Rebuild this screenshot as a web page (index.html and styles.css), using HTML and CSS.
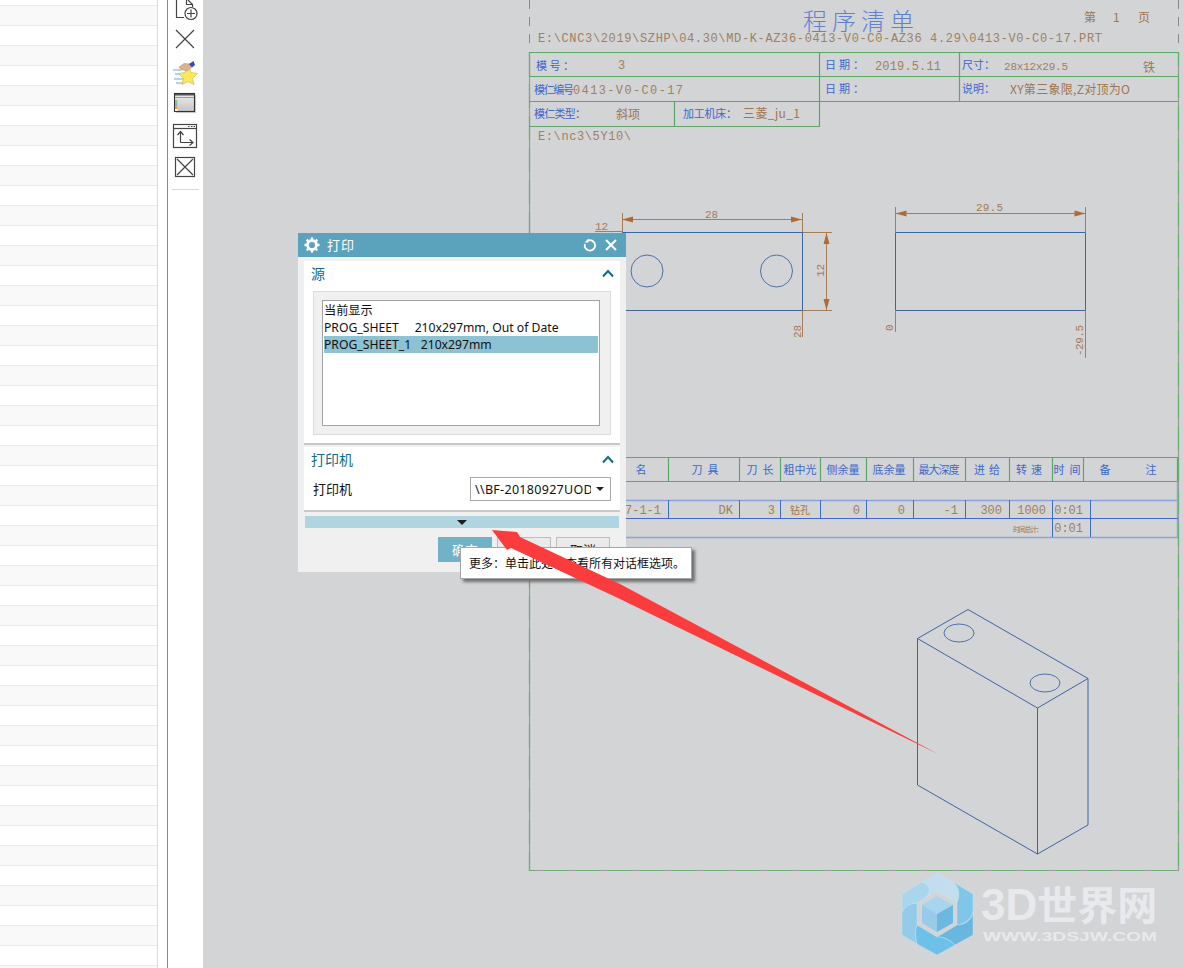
FILE: index.html
```html
<!DOCTYPE html>
<html lang="zh">
<head>
<meta charset="utf-8">
<title>打印</title>
<link rel="stylesheet" href="styles.css">
</head>
<body>
<div class="app">
  <div class="list">
    <div class="row alt"></div><div class="row"></div><div class="row alt"></div><div class="row"></div><div class="row alt"></div><div class="row"></div><div class="row alt"></div>
    <div class="row"></div><div class="row alt"></div><div class="row"></div><div class="row alt"></div><div class="row"></div><div class="row alt"></div><div class="row"></div>
    <div class="row alt"></div><div class="row"></div><div class="row alt"></div><div class="row"></div><div class="row alt"></div><div class="row"></div><div class="row alt"></div>
    <div class="row"></div><div class="row alt"></div><div class="row"></div><div class="row alt"></div><div class="row"></div><div class="row alt"></div><div class="row"></div>
    <div class="row alt"></div><div class="row"></div><div class="row alt"></div><div class="row"></div><div class="row alt"></div><div class="row"></div><div class="row alt"></div>
    <div class="row"></div><div class="row alt"></div><div class="row"></div><div class="row alt"></div><div class="row"></div><div class="row alt"></div><div class="row"></div>
    <div class="row alt"></div><div class="row"></div><div class="row alt"></div><div class="row"></div><div class="row alt"></div><div class="row"></div><div class="row alt"></div>
  </div>
  <div class="spacer"></div>
  <div class="toolbar">
    <svg class="tool" width="35" height="22" viewBox="168 0 35 22" fill="none" stroke="#444" stroke-width="1.2">
      <path d="M176.5 0V17.5H184"/><path d="M186.5 0V4.5H192.5V7"/><path d="M192.5 4.5L188 0"/>
      <circle cx="191" cy="13.5" r="6" fill="#fff"/><path d="M191 9.5V17.5M187 13.5H195"/>
    </svg>
    <svg class="tool" width="35" height="22" viewBox="168 28 35 22" fill="none" stroke="#444" stroke-width="1.2">
      <path d="M176 30L194 48M194 30L176 48"/>
    </svg>
    <svg class="tool" width="35" height="30" viewBox="168 56 35 30" fill="none">
      <path d="M173 70H182M175 74H183M174 79H184M176 83H184" stroke="#6aa9dc" stroke-width="1"/>
      <path d="M188 65L191 72.5L197.5 73.5L192.5 78.5L194 84.500L188 81.500L182 84.500L183.500 78.500L178.500 73.500L185 72.500Z" fill="#fbe95c" stroke="#d9bb58" stroke-width=".8"/>
      <path d="M179 67L184 63.500L190 64L191.500 67.500L187 71L183 70L180 68.500Z" fill="#d9b48c" stroke="#a88a6c" stroke-width=".5"/>
      <path d="M189 64L193.500 61L195 65L192 67.500Z" fill="#3b46c0"/>
    </svg>
    <svg class="tool" width="35" height="22" viewBox="168 92 35 22" fill="none">
      <defs><linearGradient id="winfill" x1="0" y1="0" x2="0" y2="1"><stop offset="0" stop-color="#eeeeee"/><stop offset="1" stop-color="#c4c4c4"/></linearGradient></defs>
      <rect x="176" y="95" width="20" height="18" fill="#ccc"/>
      <rect x="174.500" y="93.500" width="20" height="18" fill="url(#winfill)" stroke="#333" stroke-width="1.100"/>
      <rect x="175" y="94" width="19" height="1.500" fill="#555"/>
      <rect x="175" y="97" width="19" height="1" fill="#999"/>
      <rect x="175" y="100" width="2.500" height="11" fill="#fff"/>
      <rect x="175" y="100" width="2.500" height="3" fill="#7ccb6a"/><rect x="175" y="103" width="2.500" height="3" fill="#62bfe6"/><rect x="175" y="106" width="2.500" height="3" fill="#ef9c3f"/>
    </svg>
    <svg class="tool" width="35" height="30" viewBox="168 120 35 30" fill="none" stroke="#444" stroke-width="1.200">
      <rect x="173.500" y="124.500" width="23" height="23"/><path d="M173.500 128.500H196.500"/>
      <path d="M188 126.500H189.500M191 126.500H192.500M193.500 126.500H195" />
      <path d="M180.500 142.500V132M177.500 135L180.500 131.500L183.500 135M180.500 142.500H192.500M189.500 139.500L193 142.500L189.500 145.500"/>
    </svg>
    <svg class="tool" width="35" height="22" viewBox="168 156 35 22" fill="none" stroke="#444" stroke-width="1.200">
      <rect x="175.500" y="157.500" width="19" height="19"/><path d="M177 159L193 175M193 159L177 175"/>
    </svg>
    <div class="tool-sep"></div>
  </div>
  <div class="canvas">
    <svg class="sheet" width="981" height="968" viewBox="203 0 981 968" fill="none">
      <path class="dash" d="M529.500 0V50M1178.500 0V50"/>
      <path class="frame-gray" d="M529.500 52V870.500H1178.500V52"/>
      <path class="frame" d="M529.500 52V870.500H1178.500V52"/>
      <path class="green" d="M529 52.500H1178M529 76.500H1178M529 101.500H1178M529 126.500H820M819.500 52V126M959.500 52V101M674.500 101V126"/>

      <text class="title" x="803" y="30" textLength="111">程序清单</text>
      <text class="val" x="1084" y="22">第</text><text class="val" x="1113" y="22">1</text><text class="val" x="1138" y="22">页</text>
      <text class="mono" x="538" y="42" textLength="564">E:\CNC3\2019\SZHP\04.30\MD-K-AZ36-0413-V0-C0-AZ36 4.29\0413-V0-C0-17.PRT</text>

      <text class="lbl" x="536" y="70" textLength="38">模号：</text>
      <text class="mono" x="618" y="69">3</text>
      <text class="lbl" x="825" y="69" textLength="39">日期：</text>
      <text class="mono" x="875" y="70" textLength="66">2019.5.11</text>
      <text class="lbl" x="962" y="69" textLength="33">尺寸：</text>
      <text class="mono small" x="1004" y="70" textLength="64">28x12x29.5</text>
      <text class="val" x="1143" y="72">铁</text>

      <text class="lbl" x="534" y="94" textLength="40">模仁编号</text>
      <text class="mono" x="573" y="94" textLength="110">0413-V0-C0-17</text>
      <text class="lbl" x="825" y="93" textLength="39">日期：</text>
      <text class="lbl" x="962" y="93" textLength="33">说明：</text>
      <text class="val" x="1010" y="94" textLength="120">XY第三象限,Z对顶为O</text>

      <text class="lbl" x="534" y="118" textLength="52">模仁类型：</text>
      <text class="val" x="616" y="119" textLength="24">斜项</text>
      <text class="lbl" x="683" y="118" textLength="54">加工机床：</text>
      <text class="val" x="743" y="118" textLength="57">三菱_ju_1</text>
      <text class="mono" x="538" y="140" textLength="93">E:\nc3\5Y10\</text>

      <path class="dim" d="M622.500 213V233M802.500 213V337M802 232.500H832M802 310.500H832M622 219.500H802M826.500 233V310M595 231.500H622"/>
      <path class="head" d="M622 219.500L633 216.500V222.500ZM802 219.500L791 216.500V222.500ZM826.500 233L823.500 244H829.500ZM826.500 310L823.500 299H829.500Z"/>
      <text class="dimtext" x="705" y="218">28</text>
      <text class="dimtext" x="595" y="230">12</text>
      <text class="dimtext" transform="translate(824 277) rotate(-90)">12</text>
      <text class="dimtext" transform="translate(801 338) rotate(-90)">28</text>

      <path class="blue" d="M622 232.500H802.500V310.500H622M895.500 232.500H1085.500V310.500H895.500Z"/>
      <circle class="blue thin" cx="647" cy="271" r="16"/>
      <circle class="blue thin" cx="776.500" cy="271" r="16"/>

      <path class="dim" d="M895.500 207V232M1085.500 207V232M895.500 310V332M1085.500 310V358M895 213.500H1085"/>
      <path class="head" d="M895.500 213.500L906.500 210.500V216.500ZM1085.500 213.500L1074.500 210.500V216.500Z"/>
      <text class="dimtext" x="976" y="211" textLength="27">29.5</text>
      <text class="dimtext" transform="translate(893 331) rotate(-90)">0</text>
      <text class="dimtext" transform="translate(1083 356) rotate(-90)" textLength="31">-29.5</text>

      <path class="green" d="M529 457.500H1178M529 481.500H1178M668.500 457V481M739.500 457V481M780.500 457V481M820.500 457V481M866.500 457V481M913.500 457V481M965.500 457V481M1009.500 457V481M1052.500 457V481M1083.500 457V481M1177.500 457V481"/>
      <path class="tbl-soft" d="M529 500.500H1178M529 537.500H1178M1177.500 481V537"/>
      <path class="tbl" d="M529 518.500H1178M668.500 500V518M739.500 500V518M780.500 500V518M820.500 500V518M866.500 500V518M913.500 500V518M965.500 500V518M1009.500 500V518M1052.500 500V537M1090.500 500V537"/>

      <text class="lbl mid" x="641" y="474">名</text>
      <text class="lbl mid" x="705" y="474" textLength="27">刀具</text>
      <text class="lbl mid" x="760" y="474" textLength="27">刀长</text>
      <text class="lbl mid" x="800" y="474" textLength="33">粗中光</text>
      <text class="lbl mid" x="843" y="474" textLength="33">侧余量</text>
      <text class="lbl mid" x="889" y="474" textLength="33">底余量</text>
      <text class="lbl mid" x="939" y="474" textLength="41">最大深度</text>
      <text class="lbl mid" x="987" y="474" textLength="26">进给</text>
      <text class="lbl mid" x="1029" y="474" textLength="26">转速</text>
      <text class="lbl mid" x="1067" y="474" textLength="27">时间</text>
      <text class="lbl mid" x="1105" y="474">备</text>
      <text class="lbl mid" x="1151" y="474">注</text>

      <text class="mono end" x="661" y="514">17-1-1</text>
      <text class="mono end" x="733" y="514">DK</text>
      <text class="mono end" x="775" y="514">3</text>
      <text class="val tiny mid" x="800" y="514">钻孔</text>
      <text class="mono end" x="860" y="514">0</text>
      <text class="mono end" x="905" y="514">0</text>
      <text class="mono end" x="958" y="514">-1</text>
      <text class="mono end" x="1002" y="514">300</text>
      <text class="mono end" x="1046" y="514">1000</text>
      <text class="mono end" x="1083" y="514">0:01</text>
      <text class="val micro" x="1013" y="532" textLength="30">时间总计：</text>
      <text class="mono end" x="1083" y="532">0:01</text>

      <path class="blue" d="M968 609.500L917.500 638.500L1037.500 708L1088 678.500ZM917.500 638.500V785L1037.500 854L1088 825V678.500M1037.500 708V854"/>
      <ellipse class="blue thin" cx="959" cy="633" rx="15" ry="9"/>
      <ellipse class="blue thin" cx="1045" cy="683" rx="15" ry="9"/>

      <g class="logo">
        <path class="blade" d="M922 882L937 873L953 882C960 888 960 896 957 903L937 891L925 898C932 892 930 885 922 882Z" fill="#c2dded"/>
        <path class="blade" d="M953 882L973 894V912C972 920 962 925 957 925V903C960 896 960 888 953 882Z" fill="#7fc6e8"/>
        <path class="blade" d="M973 912V935L955 945C948 938 942 937 937 937L957 925C965 925 972 920 973 912Z" fill="#69b6de"/>
        <path class="blade" d="M955 945L937 955L917 944C915 936 915 930 917 925L937 937C942 937 948 938 955 945Z" fill="#6cc0ea"/>
        <path class="blade" d="M917 944L902 935V912C905 905 912 903 917 903V925C915 930 915 936 917 944Z" fill="#93cbe8"/>
        <path class="blade" d="M902 912V894L922 882C930 885 932 892 925 898L917 903C912 903 905 905 902 912Z" fill="#a9d6ec"/>
        <path d="M937 896L953 905L937 914L922 905Z" fill="#a6d5ef"/>
        <path d="M922 905L937 914V932L922 923Z" fill="#97cbe9"/>
        <path d="M953 905V923L937 932V914Z" fill="#6cb8e0"/>
        <text class="wm" x="981" y="920"><tspan class="wm-latin">3D</tspan><tspan class="wm-cjk">世界网</tspan></text>
        <text class="wm-url" x="983" y="941" textLength="174" lengthAdjust="spacingAndGlyphs">WWW.3DSJW.COM</text>
      </g>
    </svg>
  </div>

  <section class="dialog">
    <header class="dialog-title">
      <svg width="16" height="16" viewBox="0 0 16 16"><circle cx="8" cy="8" r="4.500" fill="none" stroke="#fff" stroke-width="2.800"/><path d="M8 .5V3M8 13V15.500M.5 8H3M13 8H15.500M2.700 2.700L4.500 4.500M11.500 11.500L13.300 13.300M13.300 2.700L11.500 4.500M4.500 11.500L2.700 13.300" stroke="#fff" stroke-width="2.400"/></svg>
      <span class="dialog-name">打印</span>
      <svg class="title-reset" width="14" height="14" viewBox="0 0 14 14" fill="none" stroke="#fff" stroke-width="1.800"><path d="M4.500 2.800A5.200 5.200 0 1 1 1.900 6"/><path d="M5.500 .4V4.600H1.500" fill="#fff" stroke="none"/></svg>
      <svg width="14" height="14" viewBox="0 0 14 14" fill="none" stroke="#fff" stroke-width="2"><path d="M2 2L12 12M12 2L2 12"/></svg>
    </header>
    <div class="panel panel-source">
      <div class="panel-head"><span>源</span><svg width="12" height="9" viewBox="0 0 12 9" fill="none" stroke="#0f6c8c" stroke-width="2"><path d="M1 7.500L6 2L11 7.500"/></svg></div>
      <div class="group">
        <div class="listbox">
          <div class="item">当前显示</div>
          <div class="item">PROG_SHEET&nbsp;&nbsp;&nbsp;&nbsp;&nbsp;210x297mm, Out of Date</div>
          <div class="item selected">PROG_SHEET_1&nbsp;&nbsp;&nbsp;210x297mm</div>
        </div>
      </div>
    </div>
    <div class="panel panel-printer">
      <div class="panel-head"><span>打印机</span><svg width="12" height="9" viewBox="0 0 12 9" fill="none" stroke="#0f6c8c" stroke-width="2"><path d="M1 7.500L6 2L11 7.500"/></svg></div>
      <div class="field">
        <span class="field-label">打印机</span>
        <div class="select"><span class="select-text">\\BF-20180927UODF</span><span class="caret"></span></div>
      </div>
    </div>
    <div class="more"><span class="more-caret"></span></div>
    <div class="buttons">
      <button class="btn primary">确定</button>
      <button class="btn">应用</button>
      <button class="btn">取消</button>
    </div>
  </section>

  <div class="tip">更多：单击此处以查看所有对话框选项。</div>

  <svg class="arrow" width="460" height="240" viewBox="485 520 460 240">
    <path d="M492 530L517 532L520 537L620 584L938 754L620 599L511 548L507 550Z" fill="#fb3c3c"/>
  </svg>
</div>
</body>
</html>
```
FILE: styles.css
```css
html, body {
  margin: 0;
  padding: 0;
  height: 100%;
  overflow: hidden;
  background: #fff;
}
.app {
  position: relative;
  display: flex;
  width: 1184px;
  height: 968px;
  overflow: hidden;
  font-family: "Noto Sans", "Noto Sans CJK SC", sans-serif;
}
.list {
  width: 158px;
  padding-top: 5px;
  box-sizing: border-box;
  border-right: 1px solid #dcdcdc;
  flex: none;
  overflow: hidden;
}
.row {
  height: 19px;
  border-top: 1px solid #e8e8e8;
  background: #fff;
}
.row.alt { background: #f9f9f9; }
.spacer {
  width: 9px;
  flex: none;
}
.toolbar {
  width: 36px;
  flex: none;
  box-sizing: border-box;
  border-left: 1px solid #8a8a8a;
  display: flex;
  flex-direction: column;
  gap: 6px;
  background: #fff;
}
.tool {
  display: block;
  flex: none;
}
.tool-sep {
  height: 1px;
  margin: 5px 4px 0;
  background: #d8d8d8;
}
.canvas {
  flex: 1;
  background: #d3d4d6;
  overflow: hidden;
}
.sheet { display: block; }

.dash { stroke: #8a8a8a; stroke-width: 1; stroke-dasharray: 9 8; }
.frame-gray { stroke: #9a9a9a; stroke-width: 1.200; }
.frame { stroke: #63b36b; stroke-width: 1.200; stroke-dasharray: 24 8; }
.green { stroke: #5da765; stroke-width: 1.200; }
.blue { stroke: #3d65a5; stroke-width: 1; }
.blue.thin { stroke-width: .9; }
.dim { stroke: #a97c58; stroke-width: 1; }
.head { fill: #ad6c37; }
.tbl { stroke: #3c6bd0; stroke-width: 1; }
.tbl-soft { stroke: #8ba3d8; stroke-width: 1.400; }
.blade { stroke: #cfe5f1; stroke-width: .4; }

.sheet text { font-family: "Liberation Mono", "Noto Sans CJK SC", monospace; }
.sheet .title { font-family: "Noto Sans CJK SC", sans-serif; font-size: 24px; font-weight: 300; fill: #5f80d4; }
.sheet .lbl { font-family: "Noto Sans CJK SC", sans-serif; font-size: 11px; fill: #3b67cc; }
.sheet .val { font-family: "Noto Sans CJK SC", sans-serif; font-size: 12px; fill: #a0744e; }
.sheet .tiny { font-size: 10px; }
.sheet .micro { font-size: 7px; }
.sheet .mono { font-size: 12px; fill: #a0805f; }
.sheet .mono.small { font-size: 11px; }
.sheet .dimtext { font-size: 11px; fill: #a67a55; }
.sheet .mid { text-anchor: middle; }
.sheet .end { text-anchor: end; }
.sheet .wm { font-family: "Liberation Sans", "Noto Sans CJK SC", sans-serif; font-weight: 700; fill: #e8e9ec; }
.wm-latin { font-size: 44px; }
.wm-cjk { font-size: 40px; }
.sheet .wm-url { font-family: "Liberation Sans", sans-serif; font-size: 12px; font-weight: 700; fill: #e8e9ec; }

.dialog {
  position: absolute;
  left: 298px;
  top: 233px;
  width: 328px;
  height: 339px;
  background: #f0f0f0;
  display: flex;
  flex-direction: column;
  font-size: 13px;
  color: #111;
}
.dialog-title {
  height: 24px;
  flex: none;
  display: flex;
  align-items: center;
  gap: 7px;
  padding: 0 8px 0 6px;
  background: #5ba2bc;
  color: #fff;
}
.dialog-name { flex: 1; font-size: 13px; letter-spacing: 1px; padding-bottom: 2px; }
.panel {
  margin: 4px 6px 0;
  background: #fff;
  border-bottom: 2px solid #c9c9c9;
}
.panel-source { height: 182px; }
.panel-printer { margin-top: 2px; height: 63px; }
.panel-head {
  height: 30px;
  box-sizing: border-box;
  padding: 0 6px 6px 7px;
  display: flex;
  align-items: center;
  justify-content: space-between;
  color: #0f6c8c;
  font-size: 14px;
}
.group {
  margin: 0 9px;
  height: 144px;
  box-sizing: border-box;
  padding: 8px 10px 8px 8px;
  background: #f0f0f0;
  border: 1px solid #dcdcdc;
}
.listbox {
  height: 126px;
  box-sizing: border-box;
  padding: 1px;
  background: #fff;
  border: 1px solid #a3a3a3;
}
.item {
  height: 17px;
  line-height: 17px;
  font-size: 12.200px;
  white-space: nowrap;
}
.item.selected { background: #8cc2d1; }
.field {
  display: flex;
  align-items: center;
  justify-content: space-between;
  padding: 0 9px 0 9px;
}
.field-label { font-size: 13px; padding-bottom: 2px; }
.select {
  width: 141px;
  height: 24px;
  box-sizing: border-box;
  border: 1px solid #aaa;
  display: flex;
  align-items: center;
  padding: 0 6px 0 4px;
  gap: 5px;
  background: #fff;
}
.select-text {
  flex: 1;
  overflow: hidden;
  white-space: nowrap;
  font-size: 12.500px;
  letter-spacing: .3px;
}
.caret {
  width: 0;
  height: 0;
  border-left: 4px solid transparent;
  border-right: 4px solid transparent;
  border-top: 4px solid #222;
}
.more {
  margin: 4px 7px 0;
  height: 12px;
  flex: none;
  background: #aed5e0;
  display: flex;
  justify-content: center;
  align-items: center;
}
.more-caret {
  width: 0;
  height: 0;
  margin-right: 1px;
  border-left: 5px solid transparent;
  border-right: 5px solid transparent;
  border-top: 5px solid #1c1c1c;
}
.buttons {
  margin-top: 9px;
  padding-right: 16px;
  display: flex;
  justify-content: flex-end;
  gap: 5px;
}
.btn {
  width: 54px;
  height: 25px;
  padding: 0;
  box-sizing: border-box;
  border: 1px solid #bdbdbd;
  background: #eaeaea;
  font-family: inherit;
  font-size: 13px;
  color: #222;
}
.btn.primary { background: #72b2c9; border-color: #72b2c9; color: #fff; }
.tip {
  position: absolute;
  left: 460px;
  top: 547px;
  width: 232px;
  height: 32px;
  box-sizing: border-box;
  padding-left: 8px;
  display: flex;
  align-items: center;
  background: #fff;
  border: 1px solid #a5a5a5;
  box-shadow: 3px 3px 3px #6f6f6f;
  font-size: 12px;
  color: #111;
  white-space: nowrap;
}
.arrow {
  position: absolute;
  left: 485px;
  top: 520px;
  pointer-events: none;
}
```
